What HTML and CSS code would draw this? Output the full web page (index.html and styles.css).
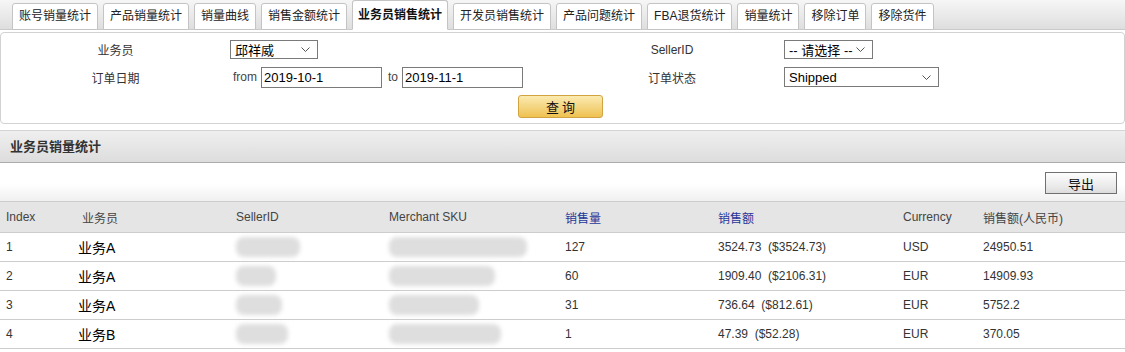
FILE: index.html
```html
<!DOCTYPE html>
<html lang="zh-CN">
<head>
    <meta charset="UTF-8">
    <title>业务员销售统计</title>
    <link rel="stylesheet" href="styles.css">
</head>
<body>
    <div class="tabs">
        <a class="tab">账号销量统计</a>
        <a class="tab">产品销量统计</a>
        <a class="tab">销量曲线</a>
        <a class="tab">销售金额统计</a>
        <a class="tab active">业务员销售统计</a>
        <a class="tab">开发员销售统计</a>
        <a class="tab">产品问题统计</a>
        <a class="tab">FBA退货统计</a>
        <a class="tab">销量统计</a>
        <a class="tab">移除订单</a>
        <a class="tab">移除货件</a>
    </div>

    <div class="filter">
        <label class="label">业务员</label>
        <div class="field">
            <span class="select sel-user">邱祥威<svg width="9" height="5" viewBox="0 0 9 5"><path d="M0.5 0.5 L4.5 4.5 L8.5 0.5" fill="none" stroke="#555" stroke-width="1"/></svg></span>
        </div>
        <label class="label">SellerID</label>
        <div class="field">
            <span class="select sel-seller">-- 请选择 --<svg width="9" height="5" viewBox="0 0 9 5"><path d="M0.5 0.5 L4.5 4.5 L8.5 0.5" fill="none" stroke="#555" stroke-width="1"/></svg></span>
        </div>

        <label class="label">订单日期</label>
        <div class="field dates">
            <span class="word">from</span>
            <input class="date" type="text" value="2019-10-1">
            <span class="word to">to</span>
            <input class="date" type="text" value="2019-11-1">
        </div>
        <label class="label">订单状态</label>
        <div class="field">
            <span class="select sel-status">Shipped<svg width="9" height="5" viewBox="0 0 9 5"><path d="M0.5 0.5 L4.5 4.5 L8.5 0.5" fill="none" stroke="#555" stroke-width="1"/></svg></span>
        </div>

        <button class="search">查 询</button>
    </div>

    <div class="section-title">业务员销量统计</div>

    <div class="toolbar">
        <button class="export">导出</button>
    </div>

    <table class="report">
        <colgroup>
            <col style="width: 76px">
            <col style="width: 154px">
            <col style="width: 153px">
            <col style="width: 176px">
            <col style="width: 153px">
            <col style="width: 185px">
            <col style="width: 80px">
            <col>
        </colgroup>
        <thead>
            <tr>
                <th>Index</th>
                <th>业务员</th>
                <th>SellerID</th>
                <th>Merchant SKU</th>
                <th class="sort">销售量</th>
                <th class="sort">销售额</th>
                <th>Currency</th>
                <th>销售额(人民币)</th>
            </tr>
        </thead>
        <tbody>
            <tr>
                <td>1</td>
                <td class="name">业务A</td>
                <td><span class="blur" style="width: 64px"></span></td>
                <td><span class="blur" style="width: 138px"></span></td>
                <td>127</td>
                <td>3524.73&nbsp;&nbsp;($3524.73)</td>
                <td>USD</td>
                <td>24950.51</td>
            </tr>
            <tr>
                <td>2</td>
                <td class="name">业务A</td>
                <td><span class="blur" style="width: 40px"></span></td>
                <td><span class="blur" style="width: 106px"></span></td>
                <td>60</td>
                <td>1909.40&nbsp;&nbsp;($2106.31)</td>
                <td>EUR</td>
                <td>14909.93</td>
            </tr>
            <tr>
                <td>3</td>
                <td class="name">业务A</td>
                <td><span class="blur" style="width: 46px"></span></td>
                <td><span class="blur" style="width: 90px"></span></td>
                <td>31</td>
                <td>736.64&nbsp;&nbsp;($812.61)</td>
                <td>EUR</td>
                <td>5752.2</td>
            </tr>
            <tr>
                <td>4</td>
                <td class="name">业务B</td>
                <td><span class="blur" style="width: 52px"></span></td>
                <td><span class="blur" style="width: 112px"></span></td>
                <td>1</td>
                <td>47.39&nbsp;&nbsp;($52.28)</td>
                <td>EUR</td>
                <td>370.05</td>
            </tr>
        </tbody>
    </table>
</body>
</html>
```

FILE: styles.css
```css
body {
    margin: 0;
    font-family: "Liberation Sans", "Noto Sans CJK SC", sans-serif;
    font-size: 12px;
    color: #333;
    background: #fff;
}

/* tab strip */
.tabs {
    display: flex;
    align-items: flex-end;
    gap: 5px;
    height: 29px;
    padding-left: 12px;
    background: linear-gradient(#f6f6f6 0%, #dedede 100%);
    border-bottom: 1px solid #c9c9c9;
}

.tab {
    box-sizing: border-box;
    height: 27px;
    margin-bottom: -1px;
    padding: 0 6px;
    line-height: 25px;
    color: #222;
    background: #fff;
    border: 1px solid #c4c4c4;
    border-radius: 3px 3px 0 0;
    white-space: nowrap;
}

.tab.active {
    height: 30px;
    line-height: 28px;
    padding: 0 5px;
    font-weight: bold;
    color: #111;
    border-bottom-color: #fff;
}

/* filter form */
.filter {
    display: grid;
    grid-template-columns: 229px 330px 224px 1fr;
    grid-template-rows: 19px 20px 23px;
    row-gap: 8px;
    align-items: center;
    margin-top: 2px;
    padding: 7px 0 5px;
    border: 1px solid #d2d2d2;
    border-radius: 4px;
}

.label {
    text-align: center;
    color: #333;
}

.field {
    display: flex;
    align-items: center;
}

.select {
    box-sizing: border-box;
    display: flex;
    align-items: center;
    justify-content: space-between;
    height: 19px;
    padding: 0 7px 0 4px;
    font-size: 13px;
    color: #000;
    border: 1px solid #7a7a7a;
    background: #fff;
}

.sel-user { width: 88px; }
.sel-seller { width: 89px; }
.sel-status { width: 155px; height: 20px; }

.dates {
    padding-left: 3px;
}

.word {
    color: #444;
    margin-right: 4px;
}

.word.to {
    margin-left: 6px;
}

.date {
    box-sizing: border-box;
    width: 121px;
    height: 21px;
    margin: 0;
    padding: 0 2px;
    font-family: "Liberation Sans", sans-serif;
    font-size: 13px;
    color: #000;
    border: 1px solid #7a7a7a;
    border-radius: 0;
    outline: none;
}

.search {
    grid-column: 1 / -1;
    justify-self: center;
    margin-right: 4px;
    width: 85px;
    height: 23px;
    padding: 0;
    font-family: "Noto Sans CJK SC", sans-serif;
    font-size: 13px;
    color: #111;
    background: linear-gradient(#fbeab0 0%, #f3d27a 60%, #efc250 100%);
    border: 1px solid #d1a341;
    border-radius: 3px;
}

/* report section */
.section-title {
    margin-top: 6px;
    height: 31px;
    line-height: 31px;
    padding-left: 10px;
    font-size: 13px;
    font-weight: bold;
    color: #333;
    background: linear-gradient(#efefef 0%, #dddddd 100%);
    border-top: 1px solid #d4d4d4;
    border-bottom: 1px solid #ababab;
}

.toolbar {
    display: flex;
    justify-content: flex-end;
    align-items: flex-start;
    height: 38px;
    padding: 9px 8px 0 0;
    box-sizing: border-box;
    background: linear-gradient(#fff 0%, #fff 55%, #f0f0f0 100%);
}

.export {
    width: 72px;
    height: 22px;
    padding: 0;
    font-family: "Noto Sans CJK SC", sans-serif;
    font-size: 13px;
    color: #111;
    background: linear-gradient(#fdfdfd 0%, #e9e9e9 70%, #dcdcdc 100%);
    border: 1px solid #707070;
    border-radius: 0;
}

.report {
    width: 100%;
    table-layout: fixed;
    border-collapse: collapse;
    border-top: 1px solid #cdcdcd;
}

.report th {
    height: 30px;
    padding: 0 0 0 6px;
    text-align: left;
    font-weight: normal;
    color: #444;
    background: #e5e5e5;
    border-bottom: 1px solid #cdcdcd;
}

.report th.sort {
    color: #26379a;
}

.report td {
    height: 28px;
    padding: 0 0 0 6px;
    color: #333;
    border-bottom: 1px solid #cdcdcd;
    white-space: nowrap;
}

.report td.name {
    padding-left: 2px;
    font-size: 14px;
    color: #000;
}

.blur {
    display: inline-block;
    height: 20px;
    vertical-align: middle;
    background: #dedede;
    border-radius: 8px;
    filter: blur(2px);
}
```
